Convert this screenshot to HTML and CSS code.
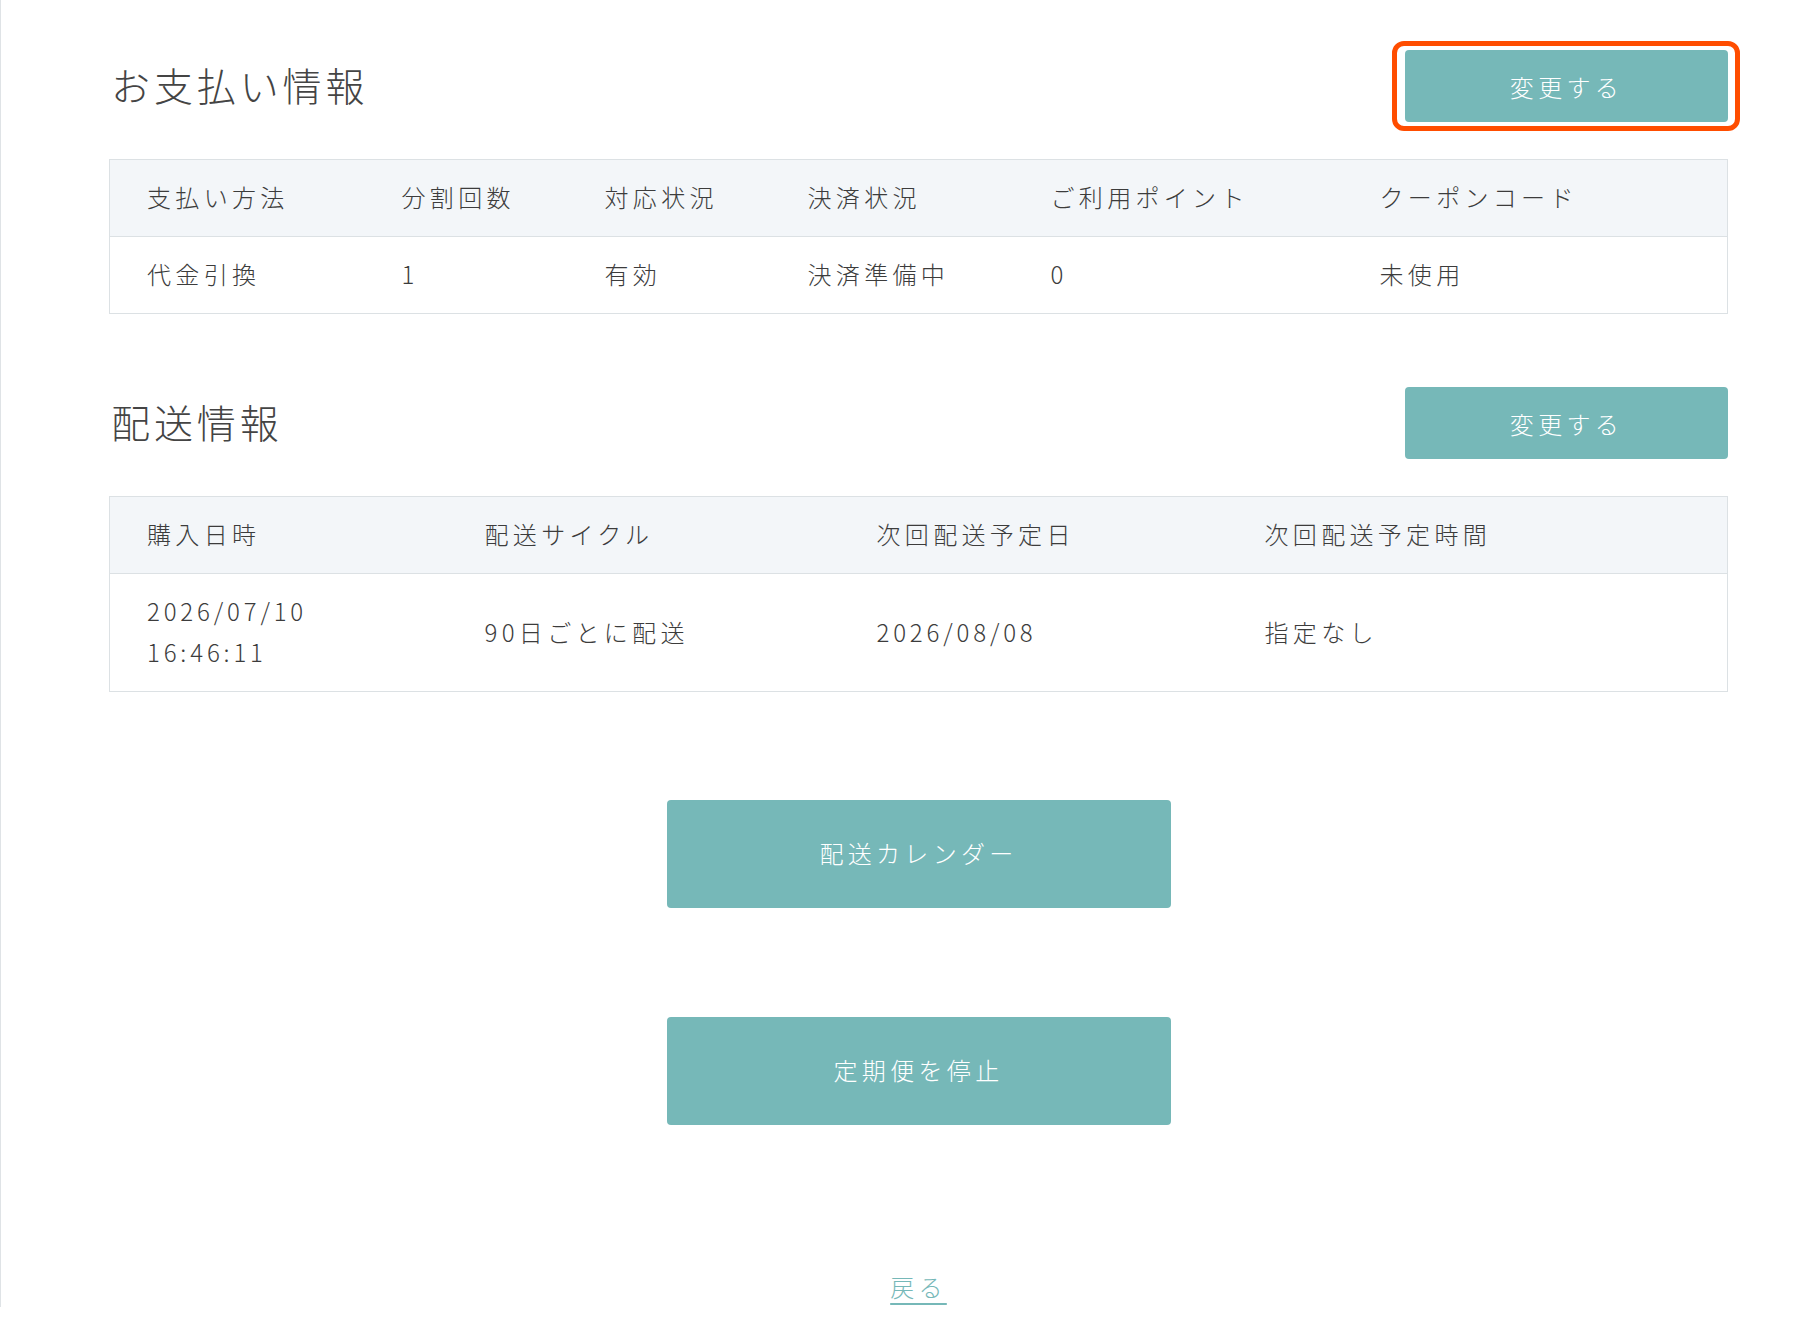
FILE: index.html
```html
<!DOCTYPE html>
<html lang="ja">
<head>
    <meta charset="UTF-8">
    <meta name="viewport" content="width=device-width, initial-scale=1.0">
    <title>定期便詳細</title>
    <link rel="stylesheet" href="styles.css">
</head>
<body>
    <div class="page">
        <section class="section">
            <div class="section-header">
                <h2 class="section-title">お支払い情報</h2>
                <button class="btn btn-change is-marked">変更する</button>
            </div>
            <table class="info-table payment-table">
                <thead>
                    <tr>
                        <th>支払い方法</th>
                        <th>分割回数</th>
                        <th>対応状況</th>
                        <th>決済状況</th>
                        <th>ご利用ポイント</th>
                        <th>クーポンコード</th>
                    </tr>
                </thead>
                <tbody>
                    <tr>
                        <td>代金引換</td>
                        <td>1</td>
                        <td>有効</td>
                        <td>決済準備中</td>
                        <td>0</td>
                        <td>未使用</td>
                    </tr>
                </tbody>
            </table>
        </section>

        <section class="section section-delivery">
            <div class="section-header">
                <h2 class="section-title">配送情報</h2>
                <button class="btn btn-change">変更する</button>
            </div>
            <table class="info-table delivery-table">
                <thead>
                    <tr>
                        <th>購入日時</th>
                        <th>配送サイクル</th>
                        <th>次回配送予定日</th>
                        <th>次回配送予定時間</th>
                    </tr>
                </thead>
                <tbody>
                    <tr>
                        <td class="num">2026/07/10<br>16:46:11</td>
                        <td>90日ごとに配送</td>
                        <td class="num">2026/08/08</td>
                        <td>指定なし</td>
                    </tr>
                </tbody>
            </table>
        </section>

        <div class="actions">
            <button class="btn btn-large">配送カレンダー</button>
            <button class="btn btn-large">定期便を停止</button>
        </div>

        <div class="back">
            <a href="#" class="back-link">戻る</a>
        </div>
    </div>
</body>
</html>
```

FILE: styles.css
```css
* {
    box-sizing: border-box;
    margin: 0;
    padding: 0;
}

body {
    background-color: #fff;
    color: #3c3c3c;
    font-family: "Noto Sans CJK JP", "Noto Sans", sans-serif;
    font-size: 24px;
    font-weight: 300;
    letter-spacing: 0.18em;
}

.page {
    border-left: 1px solid #dfe3e6;
    min-height: 1306px;
    padding: 50px 68px 0 108px;
}

.section-header {
    display: flex;
    justify-content: space-between;
    align-items: center;
    margin-bottom: 37px;
}

.section-title {
    font-size: 39px;
    font-weight: 300;
    letter-spacing: 0.1em;
    color: #444;
    margin-left: 2px;
    margin-top: -4px;
}

.section-delivery {
    margin-top: 73px;
}

.btn {
    background-color: #76b8b8;
    color: #fff;
    border: none;
    border-radius: 4px;
    font-family: inherit;
    font-size: 24px;
    font-weight: 300;
    letter-spacing: 0.18em;
    cursor: pointer;
}

.btn-change {
    position: relative;
    width: 323px;
    height: 72px;
}

/* red marker around the first button */
.is-marked::after {
    content: "";
    position: absolute;
    top: -9px;
    bottom: -9px;
    left: -13px;
    right: -12px;
    border: 5px solid #ff4d00;
    border-radius: 12px;
}

.info-table {
    width: 100%;
    border-collapse: collapse;
    border: 1px solid #dce1e4;
    table-layout: fixed;
}

.info-table th,
.info-table td {
    text-align: left;
    font-weight: 300;
    padding: 0 10px 0 37px;
    line-height: 41px;
}

.info-table th {
    background-color: #f3f6f9;
    height: 77px;
    padding-bottom: 3px;
    border-bottom: 1px solid #dce1e4;
}

.info-table td.num {
    letter-spacing: 0.16em;
}

.payment-table td {
    height: 77px;
    padding-bottom: 3px;
}

.delivery-table td {
    height: 118px;
    padding-bottom: 3px;
}

.payment-table th:nth-child(1) { width: 255px; }
.payment-table th:nth-child(2) { width: 203px; }
.payment-table th:nth-child(3) { width: 203px; }
.payment-table th:nth-child(4) { width: 243px; }
.payment-table th:nth-child(5) { width: 329px; }

.delivery-table th:nth-child(1) { width: 338px; }
.delivery-table th:nth-child(2) { width: 392px; }
.delivery-table th:nth-child(3) { width: 388px; }

.actions {
    display: flex;
    flex-direction: column;
    align-items: center;
    gap: 109px;
    margin-top: 108px;
}

.btn-large {
    width: 504px;
    height: 108px;
    padding-bottom: 3px;
}

.back {
    text-align: center;
    margin-top: 141px;
}

.back-link {
    color: #76b8b8;
    text-decoration: underline;
    text-underline-offset: 6px;
    line-height: 41px;
}
```
